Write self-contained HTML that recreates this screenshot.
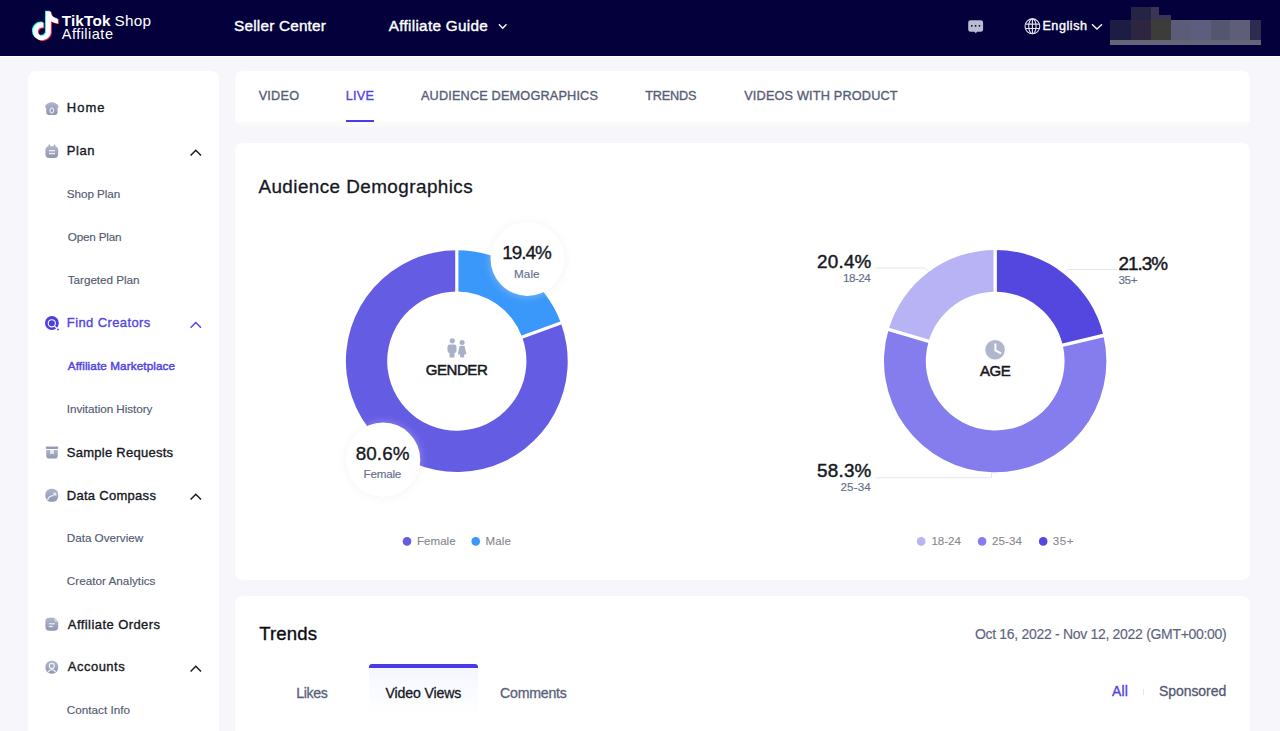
<!DOCTYPE html>
<html><head><meta charset="utf-8"><title>TikTok Shop Affiliate</title>
<style>
html,body{margin:0;padding:0}
body{width:1280px;height:731px;overflow:hidden;position:relative;background:#f6f6fb;font-family:"Liberation Sans",sans-serif}
.abs{position:absolute}
.card{background:#fff;border-radius:8px}
.t{position:absolute;white-space:nowrap;font-family:"Liberation Sans",sans-serif}
</style></head><body>

<div class="abs" style="left:0;top:0;width:1280px;height:55.5px;background:#03003c"></div>
<div class="abs" style="left:0;top:55.5px;width:1280px;height:1.2px;background:#ffffff"></div>
<svg class="abs" style="left:0;top:0" width="70" height="55" viewBox="0 0 70 55">
  <g transform="translate(31.05,11.5) scale(1.196)">
  <path d="M12.525.02c1.31-.02 2.61-.01 3.91-.02.08 1.53.63 3.09 1.75 4.17 1.12 1.11 2.7 1.62 4.24 1.79v4.03c-1.44-.05-2.89-.35-4.2-.97-.57-.26-1.1-.59-1.62-.93-.01 2.92.01 5.84-.02 8.75-.08 1.4-.54 2.79-1.350 3.94-1.31 1.92-3.58 3.17-5.91 3.21-1.43.08-2.86-.31-4.08-1.03-2.02-1.19-3.440-3.37-3.65-5.71-.02-.5-.03-1-.01-1.49.18-1.9 1.12-3.72 2.58-4.96 1.66-1.44 3.98-2.13 6.15-1.72.02 1.48-.04 2.96-.04 4.44-.99-.32-2.15-.23-3.02.37-.63.41-1.11 1.04-1.36 1.75-.21.51-.15 1.07-.14 1.61.24 1.64 1.82 3.02 3.5 2.87 1.12-.01 2.19-.66 2.77-1.61.19-.33.4-.67.41-1.06.1-1.79.06-3.57.07-5.36.01-4.03-.01-8.05.02-12.07z" fill="#25f4ee" transform="translate(-0.85,-0.6)"/>
  <path d="M12.525.02c1.31-.02 2.61-.01 3.91-.02.08 1.53.63 3.09 1.75 4.17 1.12 1.11 2.7 1.62 4.24 1.79v4.03c-1.44-.05-2.89-.35-4.2-.97-.57-.26-1.1-.59-1.62-.93-.01 2.92.01 5.84-.02 8.75-.08 1.4-.54 2.79-1.350 3.94-1.31 1.92-3.58 3.17-5.91 3.21-1.43.08-2.86-.31-4.08-1.03-2.02-1.19-3.440-3.37-3.65-5.71-.02-.5-.03-1-.01-1.49.18-1.9 1.12-3.72 2.58-4.96 1.66-1.44 3.98-2.13 6.15-1.72.02 1.48-.04 2.96-.04 4.44-.99-.32-2.15-.23-3.02.37-.63.41-1.11 1.04-1.36 1.75-.21.51-.15 1.07-.14 1.61.24 1.64 1.82 3.02 3.5 2.87 1.12-.01 2.19-.66 2.77-1.61.19-.33.4-.67.41-1.06.1-1.79.06-3.57.07-5.36.01-4.03-.01-8.05.02-12.07z" fill="#fe2c55" transform="translate(0.85,0.6)"/>
  <path d="M12.525.02c1.31-.02 2.61-.01 3.91-.02.08 1.53.63 3.09 1.75 4.17 1.12 1.11 2.7 1.62 4.24 1.79v4.03c-1.44-.05-2.89-.35-4.2-.97-.57-.26-1.1-.59-1.62-.93-.01 2.92.01 5.84-.02 8.75-.08 1.4-.54 2.79-1.350 3.94-1.31 1.92-3.58 3.17-5.91 3.21-1.43.08-2.86-.31-4.08-1.03-2.02-1.19-3.440-3.37-3.65-5.71-.02-.5-.03-1-.01-1.49.18-1.9 1.12-3.72 2.58-4.96 1.66-1.44 3.98-2.13 6.15-1.72.02 1.48-.04 2.96-.04 4.44-.99-.32-2.15-.23-3.02.37-.63.41-1.11 1.04-1.36 1.75-.21.51-.15 1.07-.14 1.61.24 1.64 1.82 3.02 3.5 2.87 1.12-.01 2.19-.66 2.77-1.61.19-.33.4-.67.41-1.06.1-1.79.06-3.57.07-5.36.01-4.03-.01-8.05.02-12.07z" fill="#ffffff"/>
  </g>
</svg>
<svg class="abs" style="left:0;top:0" width="1280" height="55" viewBox="0 0 1280 55">
 <path d="M498.9,24.2 L502.7,28.2 L506.5,24.2" fill="none" stroke="#fff" stroke-width="1.3"/>
 <path d="M1092,24.3 L1097,29 L1102,24.3" fill="none" stroke="#fff" stroke-width="1.3"/>
 <!-- chat -->
 <path d="M970.5,20.2 L980.8,20.2 Q983.1,20.2 983.1,22.5 L983.1,29.4 Q983.1,31.7 980.8,31.7 L977.2,31.7 L975.8,33.3 L974.4,31.7 L970.5,31.7 Q968.2,31.7 968.2,29.4 L968.2,22.5 Q968.2,20.2 970.5,20.2Z" fill="#b9bbd1"/>
 <circle cx="971.8" cy="25.8" r="0.9" fill="#03003c"/><circle cx="975.6" cy="25.8" r="0.9" fill="#03003c"/><circle cx="979.5" cy="25.8" r="0.9" fill="#03003c"/>
 <!-- globe -->
 <g fill="none" stroke="#e6e6ee" stroke-width="1.1">
  <circle cx="1032.4" cy="26.3" r="7.4"/>
  <ellipse cx="1032.4" cy="26.3" rx="3.7" ry="7.4"/>
  <line x1="1032.4" y1="18.9" x2="1032.4" y2="33.7"/>
  <path d="M1025.4,24.1 L1039.4,24.1 M1025.4,28.5 L1039.4,28.5"/>
 </g>
</svg>
<!-- pixel blob -->
<div class="abs" style="left:1110px;top:19.9px;width:21px;height:19.7px;background:#1c1c45"></div>
<div class="abs" style="left:1131px;top:19.9px;width:20px;height:19.7px;background:#2e2640"></div>
<div class="abs" style="left:1151px;top:19.9px;width:19.5px;height:19.7px;background:#3c3c38"></div>
<div class="abs" style="left:1170.5px;top:19.9px;width:20.3px;height:19.7px;background:#5a5c78"></div>
<div class="abs" style="left:1190.8px;top:19.9px;width:20.2px;height:19.7px;background:#5c5e80"></div>
<div class="abs" style="left:1211px;top:19.9px;width:19px;height:19.7px;background:#545670"></div>
<div class="abs" style="left:1230px;top:19.9px;width:20px;height:19.7px;background:#5e5e78"></div>
<div class="abs" style="left:1250px;top:19.9px;width:11px;height:19.7px;background:#2d2b50"></div>
<div class="abs" style="left:1131px;top:7px;width:20px;height:13px;background:#262445"></div>
<div class="abs" style="left:1151px;top:7px;width:7.5px;height:13px;background:#3a3550"></div>
<div class="abs" style="left:1158.5px;top:14.6px;width:12px;height:5.4px;background:#3a3550"></div>
<div class="abs" style="left:1110px;top:39.6px;width:151px;height:5.3px;background:#65657a"></div>


<div class="abs card" style="left:28px;top:71px;width:191px;height:700px"></div>
<div class="abs card" style="left:235px;top:71px;width:1014.5px;height:56px;background:linear-gradient(#fff 0,#fff 51px,#fafafc 51px)"></div>
<div class="abs" style="left:346px;top:120px;width:28px;height:2px;background:#4a3be6"></div>
<div class="abs card" style="left:235px;top:142.7px;width:1014.5px;height:437.8px"></div>
<div class="abs card" style="left:235px;top:595.7px;width:1014.5px;height:200px"></div>
<div class="abs" style="left:369px;top:668px;width:108.6px;height:48px;background:linear-gradient(#f4f7ff,#ffffff)"></div>
<div class="abs" style="left:369px;top:664.4px;width:108.6px;height:4px;background:#4a3be6;border-radius:3px 3px 0 0"></div>
<div class="abs" style="left:1142.7px;top:689px;width:1px;height:6px;background:#e3e5ee"></div>


<svg class="abs" style="left:0;top:0" width="240" height="731" viewBox="0 0 240 731">
 <defs><linearGradient id="ig" x1="0" y1="0" x2="0" y2="1"><stop offset="0" stop-color="#b0b5cb"/><stop offset="1" stop-color="#8f96b0"/></linearGradient></defs>
 <!-- home -->
 <path d="M45,107.3 Q45,104.6 47.6,103.4 Q51.8,101.3 56,103.4 Q58.6,104.6 58.6,107.3 L57.6,107.7 L57.6,111.9 Q57.6,114.9 54.6,114.9 L49.2,114.9 Q46.2,114.9 46.2,111.9 L46.2,107.7Z" fill="url(#ig)"/>
 <ellipse cx="51.8" cy="110.5" rx="1.8" ry="2.5" fill="none" stroke="#e9ebf5" stroke-width="1.1"/>
 <!-- plan -->
 <rect x="45.4" y="146.2" width="12.8" height="11.8" rx="4" fill="url(#ig)"/>
 <rect x="48.4" y="144.6" width="1.8" height="3" rx="0.8" fill="#a9aec6"/>
 <rect x="53.6" y="144.6" width="1.8" height="3" rx="0.8" fill="#a9aec6"/>
 <rect x="49" y="150" width="6" height="1.3" fill="#eef0f7"/>
 <rect x="49" y="152.9" width="6" height="1.3" fill="#eef0f7"/>
 <!-- find creators -->
 <circle cx="51.9" cy="323" r="6.9" fill="#4e3fe2"/>
 <circle cx="51.8" cy="323.3" r="3.6" fill="none" stroke="#fff" stroke-width="1.1"/>
 <circle cx="51.8" cy="323.3" r="2.4" fill="#4e3fe2"/>
 <path d="M54.6,326.1 L58.5,330" stroke="#fff" stroke-width="1.2"/>
 <circle cx="58" cy="329.5" r="0.9" fill="#4e3fe2"/>
 <!-- sample requests -->
 <rect x="45.9" y="446.6" width="12.2" height="2.3" rx="0.6" fill="#959bb5"/>
 <path d="M46.2,449.9 L57.8,449.9 L57.8,455.5 Q57.8,458.6 54.7,458.6 L49.3,458.6 Q46.2,458.6 46.2,455.5Z" fill="url(#ig)"/>
 <path d="M50.2,449.9 L53.8,449.9 L53.8,454.6 L52,453.6 L50.2,454.6Z" fill="#e8eaf4"/>
 <!-- data compass -->
 <rect x="45.4" y="488.8" width="12.8" height="13" rx="5.5" fill="url(#ig)"/>
 <path d="M47.5,500.3 Q48.5,496.3 51.8,495.8 Q53.5,495.6 55.2,493.8" fill="none" stroke="#eef0f7" stroke-width="1.2"/>
 <path d="M52.5,492.7 L56.3,492.7 L56.3,496.2Z" fill="#eef0f7"/>
 <!-- orders -->
 <path d="M49.4,617.8 L54.3,617.8 L58.2,621.7 L58.2,626.8 Q58.2,630.8 54.2,630.8 L49.4,630.8 Q45.4,630.8 45.4,626.8 L45.4,621.8 Q45.4,617.8 49.4,617.8Z" fill="url(#ig)"/>
 <path d="M55,618.3 L58,621.3 L55,621.3Z" fill="#a9aec6" stroke="#fff" stroke-width="0.6"/>
 <rect x="48.8" y="623.2" width="6" height="1.2" fill="#eef0f7"/>
 <rect x="48.8" y="625.9" width="4" height="1.2" fill="#eef0f7"/>
 <!-- accounts -->
 <rect x="45.4" y="660.8" width="12.8" height="13" rx="6" fill="url(#ig)"/>
 <circle cx="51.8" cy="665.9" r="2.5" fill="none" stroke="#eef0f7" stroke-width="1.2"/>
 <path d="M47.9,672 Q51.8,667.4 55.7,672" fill="none" stroke="#eef0f7" stroke-width="1.2"/>
 <!-- chevrons -->
 <path d="M190.6,155.6 L195.8,150.2 L201,155.6" fill="none" stroke="#161823" stroke-width="1.4"/>
 <path d="M190.6,327.8 L195.8,322.4 L201,327.8" fill="none" stroke="#5144e4" stroke-width="1.4"/>
 <path d="M190.6,499.6 L195.8,494.2 L201,499.6" fill="none" stroke="#161823" stroke-width="1.4"/>
 <path d="M190.6,671.6 L195.8,666.2 L201,671.6" fill="none" stroke="#161823" stroke-width="1.4"/>
</svg>

<svg class="abs" style="left:0;top:0" width="1280" height="731" viewBox="0 0 1280 731">
 <defs>
  <filter id="sh" x="-50%" y="-50%" width="200%" height="200%"><feGaussianBlur stdDeviation="3.5"/></filter>
 </defs>
 <path d="M456.80,250.20 A110.9,110.9 0 0 1 560.91,322.88 L522.14,337.11 A69.6,69.6 0 0 0 456.80,291.50 Z" fill="#3a98fb"/><path d="M560.91,322.88 A110.9,110.9 0 1 1 456.80,250.20 L456.80,291.50 A69.6,69.6 0 1 0 522.14,337.11 Z" fill="#655ce4"/><line x1="456.80" y1="293.50" x2="456.80" y2="248.20" stroke="#fff" stroke-width="3.2"/><line x1="520.26" y1="337.80" x2="562.78" y2="322.19" stroke="#fff" stroke-width="3.2"/>
 <path d="M995.20,249.90 A111.2,111.2 0 0 1 1103.41,335.48 L1062.73,345.11 A69.4,69.4 0 0 0 995.20,291.70 Z" fill="#5347e0"/><path d="M1103.41,335.48 A111.2,111.2 0 1 1 888.61,329.41 L928.68,341.32 A69.4,69.4 0 1 0 1062.73,345.11 Z" fill="#857ded"/><path d="M888.61,329.41 A111.2,111.2 0 0 1 995.20,249.90 L995.20,291.70 A69.4,69.4 0 0 0 928.68,341.32 Z" fill="#b8b3f5"/><line x1="995.20" y1="293.70" x2="995.20" y2="247.90" stroke="#fff" stroke-width="3.4"/><line x1="1060.79" y1="345.57" x2="1105.35" y2="335.02" stroke="#fff" stroke-width="3.4"/><line x1="930.60" y1="341.89" x2="886.70" y2="328.84" stroke="#fff" stroke-width="3.4"/>
 <circle cx="527.5" cy="259.5" r="38.5" fill="#dfe2ea" filter="url(#sh)" opacity="0.3"/>
 <circle cx="527.5" cy="258.9" r="37" fill="#fff"/>
 <circle cx="383.1" cy="460.3" r="38.5" fill="#dfe2ea" filter="url(#sh)" opacity="0.3"/>
 <circle cx="383.1" cy="459.7" r="37.2" fill="#fff"/>
 <!-- gender icon -->
 <g fill="#a9b0c8">
  <circle cx="452.3" cy="340.8" r="2.6"/>
  <rect x="447.5" y="344.5" width="9" height="8.5" rx="2.2"/>
  <rect x="449.5" y="350" width="5" height="7.5" rx="0.8"/>
  <circle cx="462.1" cy="342.4" r="2.5"/>
  <path d="M459.6,346.1 Q462.1,345.4 464.6,346.1 L466.3,353.6 Q466.4,354.4 465.5,354.4 L458.7,354.4 Q457.8,354.4 457.9,353.6Z"/>
  <rect x="460" y="353" width="4.2" height="4.5" rx="0.8"/>
 </g>
 <!-- clock -->
 <circle cx="995.1" cy="349.7" r="9.8" fill="#b0b6cc"/>
 <path d="M995.4,343.6 L995.4,350.3 L1000.9,353.3" fill="none" stroke="#fff" stroke-width="2"/>
 <!-- age leader lines -->
 <g fill="none" stroke="#e3e6ef" stroke-width="1">
  <path d="M875.5,268 L925,268 L928.6,271.3"/>
  <path d="M1064.5,272 L1068.3,269.5 L1116.5,269.5"/>
  <path d="M875.5,477.8 L991.5,477.8 L991.5,472.6"/>
 </g>
 <!-- legend dots -->
 <circle cx="407" cy="541.4" r="4.3" fill="#655ce4"/>
 <circle cx="475.7" cy="541.4" r="4.3" fill="#3a98fb"/>
 <circle cx="921.2" cy="541.4" r="4.3" fill="#b8b3f5"/>
 <circle cx="982.1" cy="541.4" r="4.3" fill="#857ded"/>
 <circle cx="1043.2" cy="541.4" r="4.3" fill="#5347e0"/>
</svg>

<div class="t" style="left:61.70px;top:12.70px;font-size:15.29px;line-height:15.29px;font-weight:700;color:#fff;letter-spacing:0.18px;">TikTok</div><div class="t" style="left:114.60px;top:12.70px;font-size:15.29px;line-height:15.29px;font-weight:400;color:#fff;letter-spacing:0.233px;">Shop</div><div class="t" style="left:61.70px;top:27.32px;font-size:14.57px;line-height:14.57px;font-weight:400;color:#fff;letter-spacing:0.475px;">Affiliate</div><div class="t" style="left:234.10px;top:17.80px;font-size:15.29px;line-height:15.29px;font-weight:400;color:#fff;letter-spacing:0.217px;-webkit-text-stroke:0.40px #fff;">Seller Center</div><div class="t" style="left:388.70px;top:17.80px;font-size:15.29px;line-height:15.29px;font-weight:400;color:#fff;letter-spacing:0.307px;-webkit-text-stroke:0.40px #fff;">Affiliate Guide</div><div class="t" style="left:1042.40px;top:19.52px;font-size:12.57px;line-height:12.57px;font-weight:400;color:#fff;letter-spacing:0.567px;-webkit-text-stroke:0.40px #fff;">English</div><div class="t" style="left:66.80px;top:101.45px;font-size:13.0px;line-height:13.0px;font-weight:400;color:#161823;letter-spacing:1.033px;-webkit-text-stroke:0.35px #161823;">Home</div><div class="t" style="left:66.80px;top:144.35px;font-size:13.0px;line-height:13.0px;font-weight:400;color:#161823;letter-spacing:0.533px;-webkit-text-stroke:0.35px #161823;">Plan</div><div class="t" style="left:66.80px;top:188.05px;font-size:11.71px;line-height:11.71px;font-weight:400;color:#535a73;letter-spacing:-0.075px;-webkit-text-stroke:0.15px #535a73;">Shop Plan</div><div class="t" style="left:67.80px;top:231.05px;font-size:11.71px;line-height:11.71px;font-weight:400;color:#535a73;letter-spacing:-0.2px;-webkit-text-stroke:0.15px #535a73;">Open Plan</div><div class="t" style="left:67.80px;top:273.75px;font-size:11.71px;line-height:11.71px;font-weight:400;color:#535a73;letter-spacing:-0.042px;-webkit-text-stroke:0.15px #535a73;">Targeted Plan</div><div class="t" style="left:66.80px;top:316.45px;font-size:13.0px;line-height:13.0px;font-weight:400;color:#5144e4;letter-spacing:0.4px;-webkit-text-stroke:0.35px #5144e4;">Find Creators</div><div class="t" style="left:67.80px;top:360.45px;font-size:11.71px;line-height:11.71px;font-weight:400;color:#5144e4;letter-spacing:0.105px;-webkit-text-stroke:0.45px #5144e4;">Affiliate Marketplace</div><div class="t" style="left:66.80px;top:403.45px;font-size:11.71px;line-height:11.71px;font-weight:400;color:#535a73;letter-spacing:-0.053px;-webkit-text-stroke:0.15px #535a73;">Invitation History</div><div class="t" style="left:66.80px;top:445.85px;font-size:13.0px;line-height:13.0px;font-weight:400;color:#161823;letter-spacing:0.264px;-webkit-text-stroke:0.35px #161823;">Sample Requests</div><div class="t" style="left:66.80px;top:488.55px;font-size:13.0px;line-height:13.0px;font-weight:400;color:#161823;letter-spacing:0.282px;-webkit-text-stroke:0.35px #161823;">Data Compass</div><div class="t" style="left:66.80px;top:531.95px;font-size:11.71px;line-height:11.71px;font-weight:400;color:#535a73;letter-spacing:-0.033px;-webkit-text-stroke:0.15px #535a73;">Data Overview</div><div class="t" style="left:66.80px;top:575.05px;font-size:11.71px;line-height:11.71px;font-weight:400;color:#535a73;letter-spacing:0.013px;-webkit-text-stroke:0.15px #535a73;">Creator Analytics</div><div class="t" style="left:67.80px;top:617.75px;font-size:13.0px;line-height:13.0px;font-weight:400;color:#161823;letter-spacing:0.433px;-webkit-text-stroke:0.35px #161823;">Affiliate Orders</div><div class="t" style="left:67.80px;top:660.45px;font-size:13.0px;line-height:13.0px;font-weight:400;color:#161823;letter-spacing:0.486px;-webkit-text-stroke:0.35px #161823;">Accounts</div><div class="t" style="left:66.80px;top:703.75px;font-size:11.71px;line-height:11.71px;font-weight:400;color:#535a73;letter-spacing:0.0px;-webkit-text-stroke:0.15px #535a73;">Contact Info</div><div class="t" style="left:258.70px;top:89.80px;font-size:12.71px;line-height:12.71px;font-weight:400;color:#575e77;letter-spacing:0.2px;-webkit-text-stroke:0.35px #575e77;">VIDEO</div><div class="t" style="left:345.80px;top:89.80px;font-size:12.71px;line-height:12.71px;font-weight:400;color:#5144e4;letter-spacing:0.233px;-webkit-text-stroke:0.35px #5144e4;">LIVE</div><div class="t" style="left:420.90px;top:89.80px;font-size:12.71px;line-height:12.71px;font-weight:400;color:#575e77;letter-spacing:0.17px;-webkit-text-stroke:0.35px #575e77;">AUDIENCE DEMOGRAPHICS</div><div class="t" style="left:645.30px;top:89.80px;font-size:12.71px;line-height:12.71px;font-weight:400;color:#575e77;letter-spacing:-0.2px;-webkit-text-stroke:0.35px #575e77;">TRENDS</div><div class="t" style="left:744.20px;top:89.80px;font-size:12.71px;line-height:12.71px;font-weight:400;color:#575e77;letter-spacing:0.172px;-webkit-text-stroke:0.35px #575e77;">VIDEOS WITH PRODUCT</div><div class="t" style="left:258.40px;top:177.77px;font-size:18.86px;line-height:18.86px;font-weight:400;color:#161823;letter-spacing:0.44px;-webkit-text-stroke:0.30px #161823;">Audience Demographics</div><div class="t" style="left:502.30px;top:244.17px;font-size:18.86px;line-height:18.86px;font-weight:400;color:#161823;letter-spacing:-1.0px;-webkit-text-stroke:0.35px #161823;">19.4%</div><div class="t" style="left:514.00px;top:268.05px;font-size:11.71px;line-height:11.71px;font-weight:400;color:#66708c;letter-spacing:0.067px;-webkit-text-stroke:0.15px #66708c;">Male</div><div class="t" style="left:355.70px;top:444.57px;font-size:18.86px;line-height:18.86px;font-weight:400;color:#161823;letter-spacing:0.075px;-webkit-text-stroke:0.35px #161823;">80.6%</div><div class="t" style="left:363.50px;top:468.45px;font-size:11.71px;line-height:11.71px;font-weight:400;color:#66708c;letter-spacing:-0.26px;-webkit-text-stroke:0.15px #66708c;">Female</div><div class="t" style="left:425.80px;top:362.35px;font-size:15.0px;line-height:15.0px;font-weight:400;color:#161823;letter-spacing:-0.44px;-webkit-text-stroke:0.50px #161823;">GENDER</div><div class="t" style="left:979.90px;top:363.15px;font-size:15.0px;line-height:15.0px;font-weight:400;color:#161823;letter-spacing:-0.4px;-webkit-text-stroke:0.50px #161823;">AGE</div><div class="t" style="left:817.10px;top:252.77px;font-size:18.86px;line-height:18.86px;font-weight:400;color:#161823;letter-spacing:0.2px;-webkit-text-stroke:0.45px #161823;">20.4%</div><div class="t" style="left:843.00px;top:271.65px;font-size:11.71px;line-height:11.71px;font-weight:400;color:#66708c;letter-spacing:-0.525px;-webkit-text-stroke:0.15px #66708c;">18-24</div><div class="t" style="left:1118.40px;top:254.57px;font-size:18.86px;line-height:18.86px;font-weight:400;color:#161823;letter-spacing:-0.975px;-webkit-text-stroke:0.45px #161823;">21.3%</div><div class="t" style="left:1118.40px;top:274.15px;font-size:11.71px;line-height:11.71px;font-weight:400;color:#66708c;letter-spacing:-0.3px;-webkit-text-stroke:0.15px #66708c;">35+</div><div class="t" style="left:817.10px;top:461.97px;font-size:18.86px;line-height:18.86px;font-weight:400;color:#161823;letter-spacing:0.2px;-webkit-text-stroke:0.45px #161823;">58.3%</div><div class="t" style="left:840.40px;top:480.95px;font-size:11.71px;line-height:11.71px;font-weight:400;color:#66708c;letter-spacing:0.125px;-webkit-text-stroke:0.15px #66708c;">25-34</div><div class="t" style="left:416.90px;top:536.17px;font-size:11.57px;line-height:11.57px;font-weight:400;color:#85878e;letter-spacing:0.04px;-webkit-text-stroke:0.10px #85878e;">Female</div><div class="t" style="left:485.40px;top:536.17px;font-size:11.57px;line-height:11.57px;font-weight:400;color:#85878e;letter-spacing:0.133px;-webkit-text-stroke:0.10px #85878e;">Male</div><div class="t" style="left:931.40px;top:536.17px;font-size:11.57px;line-height:11.57px;font-weight:400;color:#85878e;letter-spacing:-0.025px;-webkit-text-stroke:0.10px #85878e;">18-24</div><div class="t" style="left:991.90px;top:536.17px;font-size:11.57px;line-height:11.57px;font-weight:400;color:#85878e;letter-spacing:0.125px;-webkit-text-stroke:0.10px #85878e;">25-34</div><div class="t" style="left:1052.80px;top:536.17px;font-size:11.57px;line-height:11.57px;font-weight:400;color:#85878e;letter-spacing:0.6px;-webkit-text-stroke:0.10px #85878e;">35+</div><div class="t" style="left:259.30px;top:625.22px;font-size:18.57px;line-height:18.57px;font-weight:400;color:#0b0b14;letter-spacing:0.12px;-webkit-text-stroke:0.35px #0b0b14;">Trends</div><div class="t" style="left:974.90px;top:626.60px;font-size:14.0px;line-height:14.0px;font-weight:400;color:#5d647e;letter-spacing:-0.305px;-webkit-text-stroke:0.15px #5d647e;">Oct 16, 2022 - Nov 12, 2022 (GMT+00:00)</div><div class="t" style="left:296.30px;top:685.88px;font-size:14.14px;line-height:14.14px;font-weight:400;color:#58607c;letter-spacing:-0.375px;-webkit-text-stroke:0.30px #58607c;">Likes</div><div class="t" style="left:385.50px;top:685.88px;font-size:14.14px;line-height:14.14px;font-weight:400;color:#161823;letter-spacing:-0.13px;-webkit-text-stroke:0.30px #161823;">Video Views</div><div class="t" style="left:500.00px;top:685.88px;font-size:14.14px;line-height:14.14px;font-weight:400;color:#58607c;letter-spacing:-0.2px;-webkit-text-stroke:0.30px #58607c;">Comments</div><div class="t" style="left:1112.10px;top:684.20px;font-size:14.0px;line-height:14.0px;font-weight:400;color:#5144e4;letter-spacing:0.1px;-webkit-text-stroke:0.35px #5144e4;">All</div><div class="t" style="left:1158.90px;top:684.20px;font-size:14.0px;line-height:14.0px;font-weight:400;color:#535a73;letter-spacing:-0.05px;-webkit-text-stroke:0.30px #535a73;">Sponsored</div>
</body></html>
